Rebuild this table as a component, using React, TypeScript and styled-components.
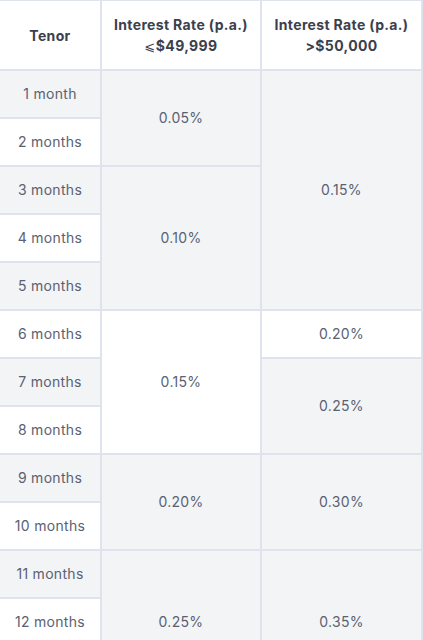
import React from "react";
import styled, { createGlobalStyle } from "styled-components";

const Global = createGlobalStyle`
  html, body { margin: 0; padding: 0; background: #ffffff; overflow: hidden; }
  * { box-sizing: border-box; }
`;

const Grid = styled.div`
  display: grid;
  grid-template-columns: 100px 158px 159px;
  grid-template-rows: 68px repeat(13, 46px);
  gap: 2px;
  padding: 1px 2px 0 0;
  width: 423px;
  background: #dfe3ee;
  font-family: Inter, "Noto Sans", sans-serif;
`;

const Cell = styled.div<{ $shade: boolean; $col: number; $row: number; $span?: number }>`
  grid-column: ${(p) => p.$col};
  grid-row: ${(p) => p.$row} / span ${(p) => p.$span ?? 1};
  background: ${(p) => (p.$shade ? "#f3f4f6" : "#ffffff")};
  display: flex;
  align-items: center;
  justify-content: center;
  text-align: center;
  font-size: 14px;
  letter-spacing: 0.3px;
  color: #5a6172;
  padding-bottom: 1px;
`;

const Head = styled(Cell)`
  flex-direction: column;
  font-size: 14px;
  font-weight: 700;
  letter-spacing: 0.35px;
  color: #3b404c;
  line-height: 21px;
  padding-bottom: 0;
`;

const Le = styled.span`
  font-family: "DejaVu Sans", sans-serif;
  font-weight: 400;
  font-size: 13px;
`;

const tenors = [
  "1 month",
  "2 months",
  "3 months",
  "4 months",
  "5 months",
  "6 months",
  "7 months",
  "8 months",
  "9 months",
  "10 months",
  "11 months",
  "12 months",
  "13 months",
];

const low = [
  { v: "0.05%", start: 1, span: 2 },
  { v: "0.10%", start: 3, span: 3 },
  { v: "0.15%", start: 6, span: 3 },
  { v: "0.20%", start: 9, span: 2 },
  { v: "0.25%", start: 11, span: 3 },
];

const high = [
  { v: "0.15%", start: 1, span: 5 },
  { v: "0.20%", start: 6, span: 1 },
  { v: "0.25%", start: 7, span: 2 },
  { v: "0.30%", start: 9, span: 2 },
  { v: "0.35%", start: 11, span: 3 },
];

export default function App() {
  return (
    <>
      <Global />
      <Grid>
        <Head $shade={false} $col={1} $row={1}>
          <div>Tenor</div>
        </Head>
        <Head $shade={false} $col={2} $row={1}>
          <div>Interest Rate (p.a.)</div>
          <div>
            <Le>⩽</Le>$49,999
          </div>
        </Head>
        <Head $shade={false} $col={3} $row={1}>
          <div>Interest Rate (p.a.)</div>
          <div>&gt;$50,000</div>
        </Head>
        {tenors.map((t, i) => (
          <Cell key={t} $shade={i % 2 === 0} $col={1} $row={i + 2}>
            {t}
          </Cell>
        ))}
        {low.map((r) => (
          <Cell key={"l" + r.start} $shade={(r.start - 1) % 2 === 0} $col={2} $row={r.start + 1} $span={r.span}>
            {r.v}
          </Cell>
        ))}
        {high.map((r) => (
          <Cell key={"h" + r.start} $shade={(r.start - 1) % 2 === 0} $col={3} $row={r.start + 1} $span={r.span}>
            {r.v}
          </Cell>
        ))}
      </Grid>
    </>
  );
}
